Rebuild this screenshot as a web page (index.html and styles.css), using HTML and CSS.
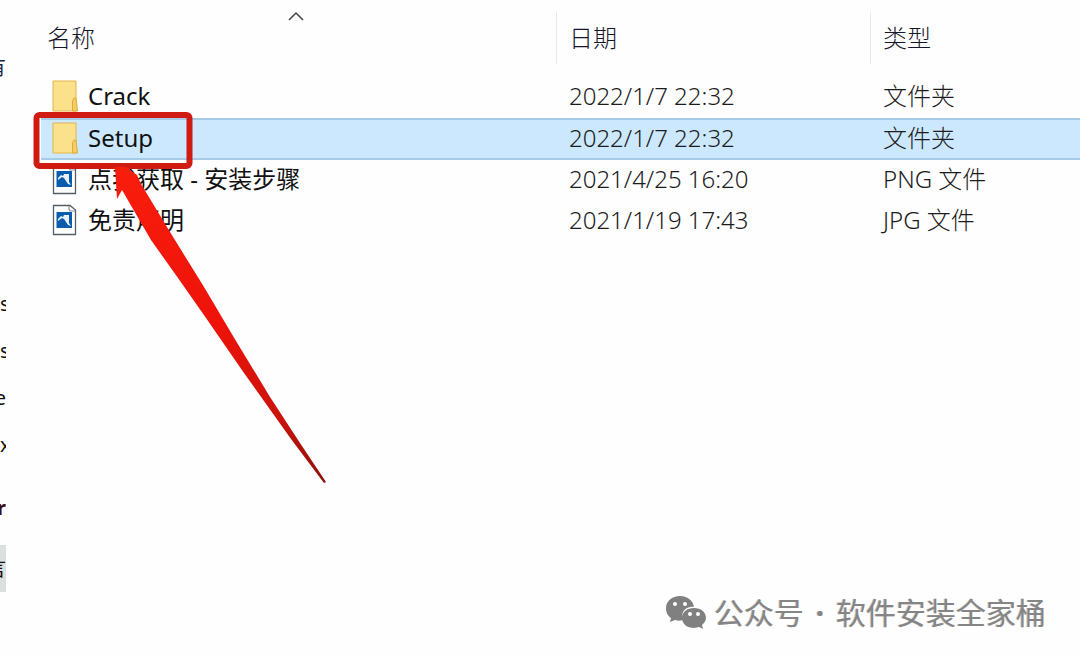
FILE: index.html
```html
<!DOCTYPE html>
<html lang="zh-CN">
<head>
<meta charset="utf-8">
<meta name="viewport" content="width=device-width, initial-scale=1">
<title>Setup</title>
<link rel="stylesheet" href="styles.css">
</head>
<body>
<svg class="defs" aria-hidden="true">
  <symbol id="folder" viewBox="0 0 26 32">
    <path d="M1 1H24V31H1Z" fill="#fbe18c" stroke="#e3b44b"/>
    <path d="M20.500 31V21L22 18H24L25.500 31Z" fill="#f5cd60" stroke="#dfaa3d"/>
  </symbol>
  <symbol id="image" viewBox="0 0 26 32">
    <path d="M1.500 1.500H18L23.500 6V30.500H1.500Z" fill="#fff" stroke="#555d66" stroke-width="1.300"/>
    <path d="M17 2V5L18 7H23" fill="none" stroke="#8b929a" stroke-width="1.200"/>
    <path d="M4.500 8H20V24H4.500Z" fill="#0b5cad"/>
    <path d="M6 17V15L9 12L11 13L12 11H17V19L19 22L16 21L12 15L10 14Z" fill="#e4f3fd"/>
  </symbol>
</svg>
<div class="explorer">
  <nav class="tree" aria-label="导航">
    <span class="item item-top">有</span>
    <span class="item item-left">s</span>
    <span class="item item-left">s</span>
    <span class="item">e</span>
    <span class="item item-left">x</span>
    <span class="item item-bold">r</span>
    <span class="item item-current">言</span>
  </nav>
  <main class="content">
    <svg class="sort" viewBox="0 0 16 10" aria-hidden="true"><path d="M1 9L8 2L15 9" fill="none" stroke="#444" stroke-width="1.500"/></svg>
    <table class="files">
      <colgroup><col class="col-name"><col class="col-date"><col></colgroup>
      <thead>
        <tr><th>名称</th><th>日期</th><th>类型</th></tr>
      </thead>
      <tbody>
        <tr><td><span class="name"><svg class="icon"><use href="#folder"/></svg>Crack</span></td><td>2022/1/7 22:32</td><td>文件夹</td></tr>
        <tr class="selected"><td><span class="name"><svg class="icon"><use href="#folder"/></svg>Setup</span></td><td>2022/1/7 22:32</td><td>文件夹</td></tr>
        <tr><td><span class="name"><svg class="icon"><use href="#image"/></svg>点我获取 - 安装步骤</span></td><td>2021/4/25 16:20</td><td>PNG 文件</td></tr>
        <tr><td><span class="name"><svg class="icon"><use href="#image"/></svg>免责声明</span></td><td>2021/1/19 17:43</td><td>JPG 文件</td></tr>
      </tbody>
    </table>
  </main>
  <svg class="pointer" viewBox="0 0 340 500" aria-hidden="true">
    <defs>
      <linearGradient id="red" x1="0" y1="0" x2="0" y2="1">
        <stop offset="0" stop-color="#f91d0c"/><stop offset=".5" stop-color="#ed1309"/><stop offset=".8" stop-color="#c9130c"/><stop offset="1" stop-color="#8c0d0a"/>
      </linearGradient>
    </defs>
    <rect x="36.500" y="115" width="153" height="51" rx="3" fill="none" stroke="#cf1b12" stroke-width="6"/>
    <path d="M115 167H126L137 175L141 184L170 232L204 287L233 336L270 397L300 443L326 482L324 483L291 439L244 373L206 318L178 278L151 240L122 190L117 199Z" fill="url(#red)"/>
  </svg>
  <footer class="watermark">
    <svg class="bubbles" viewBox="0 0 42 34" aria-hidden="true">
      <path d="M15 0C7 0 1 5 1 12C1 17 3 20 6 22L5 26L10 24C13 25 15 25 18 24C15 15 22 10 29 11C28 4 22 0 15 0Z" fill="#808080"/>
      <path d="M29 12C22 12 17 16 17 22C17 28 22 32 29 32L34 31L38 33L37 29C39 27 41 25 41 22C41 16 36 12 29 12Z" fill="#808080"/>
      <g fill="#fff"><circle cx="10" cy="8" r="2"/><circle cx="20" cy="8" r="2"/><circle cx="25" cy="18" r="2"/><circle cx="33" cy="18" r="2"/></g>
    </svg>
    <span>公众号</span><span class="dot">·</span><span>软件安装全家桶</span>
  </footer>
</div>
</body>
</html>
```
FILE: styles.css
```css
* { box-sizing: border-box; }

body {
  margin: 0;
  background: #fefefe;
  color: #111;
  font-family: "Noto Sans", "Noto Sans CJK SC", sans-serif;
  font-size: 24px;
  line-height: 32px;
}

.defs { position: absolute; width: 0; height: 0; }

.explorer {
  position: relative;
  display: flex;
  min-height: 100vh;
  overflow: hidden;
}

.tree {
  display: flex;
  flex-direction: column;
  flex: none;
  width: 6px;
  padding-top: 44px;
  font-size: 20px;
}

.item {
  display: flex;
  justify-content: flex-end;
  height: 47px;
  line-height: 47px;
  overflow: hidden;
}

.item-top { margin-bottom: 189px; color: #172a45; }
.item-left { justify-content: flex-start; }
.item-bold { margin-top: 16px; font-weight: 700; color: #3c0c0c; }
.item-current { margin-top: 14px; background: #dcdfdf; }

.content {
  position: relative;
  flex: 1;
  padding-left: 35px;
}

.sort {
  position: absolute;
  top: 11px;
  left: 282px;
  width: 16px;
  height: 10px;
}

.files {
  width: 100%;
  table-layout: fixed;
  border-collapse: separate;
  border-spacing: 0;
}

.col-name { width: 515px; }
.col-date { width: 314px; }

th {
  height: 77px;
  padding: 12px 0 14px 13px;
  text-align: left;
  font-weight: 300;
  color: #16162a;
  background: linear-gradient(#e9e9e9, #e9e9e9) 0 12px / 1px 52px no-repeat;
}

th:first-child { padding-left: 6px; background: none; }

td {
  height: 41px;
  padding: 0 0 3px 13px;
  font-weight: 300;
  color: #1c1c1c;
  white-space: nowrap;
}

td:first-child { font-weight: 400; color: #111; padding-left: 11px; }

.name { display: flex; align-items: center; gap: 10px; }
.icon { flex: none; width: 26px; height: 32px; }

.selected td {
  height: 42px;
  background: #cce8ff;
  border-top: 2px solid #a5cbe7;
  border-bottom: 2px solid #a5cbe7;
}

.pointer {
  position: absolute;
  top: 0;
  left: 0;
  width: 340px;
  height: 500px;
  pointer-events: none;
}

.watermark {
  position: absolute;
  right: 34px;
  bottom: 24px;
  display: flex;
  align-items: center;
  font-size: 30px;
  line-height: 38px;
  color: #858585;
  text-shadow: -1px 0 #c8c8c8;
}

.bubbles { width: 42px; height: 34px; margin-right: 7px; }
.dot { width: 32px; text-align: center; font-weight: 700; }
```
